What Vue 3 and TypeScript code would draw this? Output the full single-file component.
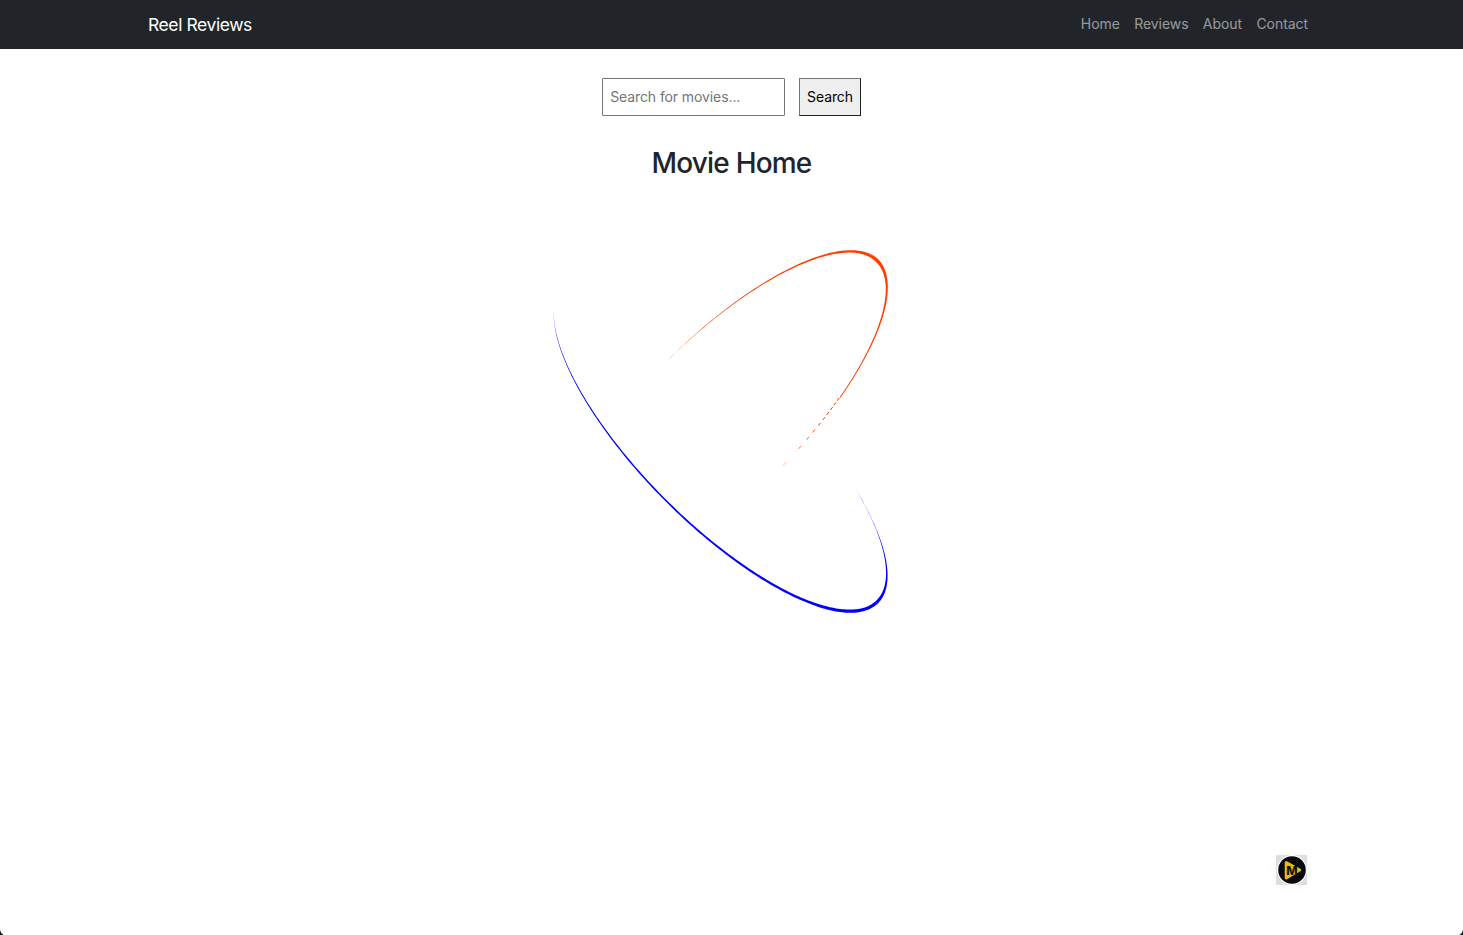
<script setup lang="ts">
type Key = [angle: number, width: number]
type Point = [x: number, y: number]

const RAD = Math.PI / 180
const CX = 720.3
const RX = 166.5
const RY = 167
const TILT = 38.8

const links: string[] = ['Home', 'Reviews', 'About', 'Contact']

function orbitPoint(t: number, cy: number, dir: number): Point {
  return [CX + RX * Math.cos(t * RAD), cy + dir * RY * Math.cos((t - TILT) * RAD)]
}

function widthAt(t: number, keys: Key[]): number {
  for (let i = 1; i < keys.length; i++) {
    if (t <= keys[i][0]) {
      const [a, wa] = keys[i - 1]
      const [b, wb] = keys[i]
      return wa + ((t - a) / (b - a)) * (wb - wa)
    }
  }
  return keys[keys.length - 1][1]
}

/* Closed outline of an arc whose thickness follows the given keys. */
function taper(cy: number, dir: number, keys: Key[]): string {
  const outer: Point[] = []
  const inner: Point[] = []
  for (let t = keys[0][0]; t <= keys[keys.length - 1][0]; t++) {
    const [x, y] = orbitPoint(t, cy, dir)
    const [px, py] = orbitPoint(t - 0.5, cy, dir)
    const [nx, ny] = orbitPoint(t + 0.5, cy, dir)
    const len = Math.hypot(nx - px, ny - py)
    const h = widthAt(t, keys) / 2
    const ox = ((ny - py) / len) * h
    const oy = (-(nx - px) / len) * h
    outer.push([x + ox, y + oy])
    inner.unshift([x - ox, y - oy])
  }
  return 'M' + [...outer, ...inner].map(([x, y]) => `${x.toFixed(2)} ${y.toFixed(2)}`).join('L') + 'Z'
}

const blue = taper(444.2, 1, [
  [-36, 0], [-20, 0.35], [0, 1.5], [20, 3.2], [39, 3.3], [60, 2.5], [97, 1.8], [120, 1.5], [136, 1.2], [160, 0.6], [182, 0],
])
const orange = taper(418.4, -1, [
  [-44, 0.8], [-39, 0.9], [-20, 1.3], [0, 2], [20, 3.5], [39, 2.3], [60, 1.5], [80, 0.9], [96, 0.5], [109, 0],
])

const specks = [
  [-45.4, -44.4, 1], [-47, -46, 1], [-48.6, -47.6, 1], [-50.3, -49.3, 1], [-52, -51, 1], [-54, -53, 1], [-56.3, -55.3, 0.9],
  [-58.8, -57.8, 0.8], [-62, -61, 0.7], [-67.9, -66.7, 0.35],
].map(([from, to, opacity]) => {
  const [x1, y1] = orbitPoint(from, 417.6, -1)
  const [x2, y2] = orbitPoint(to, 417.6, -1)
  return { x1, y1, x2, y2, opacity }
})
</script>

<template>
  <div class="page">
    <header class="navbar">
      <a class="brand">Reel Reviews</a>
      <nav class="links">
        <a v-for="link in links" :key="link" :class="['link', link.toLowerCase()]">{{ link }}</a>
      </nav>
    </header>
    <main class="content">
      <form class="search" @submit.prevent>
        <input class="field" type="text" placeholder="Search for movies..." />
        <button class="button" type="submit">Search</button>
      </form>
      <h1 class="title">Movie Home</h1>
      <svg class="loader" width="360" height="380" viewBox="540 240 360 380">
        <path :d="blue" fill="#0000ff" />
        <path :d="orange" fill="#ff3d00" />
        <line v-for="(s, i) in specks" :key="i" :x1="s.x1" :y1="s.y1" :x2="s.x2" :y2="s.y2" stroke="#ff3d00" :stroke-opacity="s.opacity" />
      </svg>
    </main>
    <div class="badge">
      <svg width="31" height="30" viewBox="0 0 31 30">
        <rect width="31" height="30" fill="#dedede" />
        <circle cx="16" cy="15" r="14.9" fill="#fff" />
        <circle cx="16" cy="15" r="13.8" fill="#080b0e" />
        <path d="M10.2 7.6L23.6 15L10.2 23Z" fill="#f2b90c" stroke="#f2b90c" stroke-width="3" stroke-linejoin="round" />
        <text x="10.2" y="20" class="mark">M</text>
      </svg>
    </div>
    <svg class="corner left" width="4" height="5" viewBox="0 0 4 5"><path d="M0 0Q.8 3.6 3.5 5H0Z" fill="#181818" /></svg>
    <svg class="corner right" width="4" height="5" viewBox="0 0 4 5"><path d="M4 0Q3.2 3.6 .5 5H4Z" fill="#181818" /></svg>
  </div>
</template>

<style>
body {
  background: #fff;
  overflow: hidden;
}
</style>

<style scoped>
.page {
  position: relative;
  box-sizing: border-box;
  height: 935px;
  font-family: Inter, "Liberation Sans", sans-serif;
  font-size: 14px;
  color: #212529;
}
.navbar {
  box-sizing: border-box;
  height: 49px;
  padding: 0 155px 0 148px;
  display: flex;
  align-items: center;
  justify-content: space-between;
  background: #212529;
}
.brand {
  color: #fff;
  font-size: 17.5px;
  line-height: 27px;
  letter-spacing: -0.42px;
}
.links {
  display: flex;
  gap: 14.4px;
}
.link {
  color: rgba(255, 255, 255, 0.55);
  line-height: 22px;
  padding-bottom: 1px;
  letter-spacing: -0.06px;
}
.content {
  display: flex;
  flex-direction: column;
  align-items: center;
}
.search {
  display: flex;
  gap: 14px;
  margin-top: 29px;
}
.field,
.button {
  box-sizing: border-box;
  height: 38px;
  margin: 0;
  font: inherit;
}
.field {
  width: 183px;
  padding: 0 7.2px 1px;
  border: 1px solid #767676;
  border-radius: 1px;
  background: #fff;
  letter-spacing: -0.1px;
}
.field::placeholder {
  color: #757575;
}
.button {
  width: 62px;
  padding: 0 0 1px;
  border: 1px solid;
  border-color: #767676 #212121 #212121 #767676;
  border-radius: 0;
  background: #efefef;
  color: #000;
  letter-spacing: -0.1px;
}
.title {
  margin: 30px 0 0;
  font-size: 28px;
  font-weight: 500;
  line-height: 35px;
  letter-spacing: -0.8px;
}
.loader {
  margin: 59px 23px 0 0;
  display: block;
  flex: none;
}
.badge {
  position: absolute;
  left: 1276px;
  top: 855px;
  width: 31px;
  height: 30px;
  border-radius: 15px;
  box-shadow: 0 0 12px rgba(0, 0, 0, 0.06);
}
.badge svg {
  display: block;
}
.mark {
  font-family: Inter, sans-serif;
  font-size: 12px;
  font-weight: 800;
  fill: #111416;
}
.corner {
  position: absolute;
  bottom: 0;
}
.left {
  left: 0;
}
.right {
  right: 0;
}
</style>
